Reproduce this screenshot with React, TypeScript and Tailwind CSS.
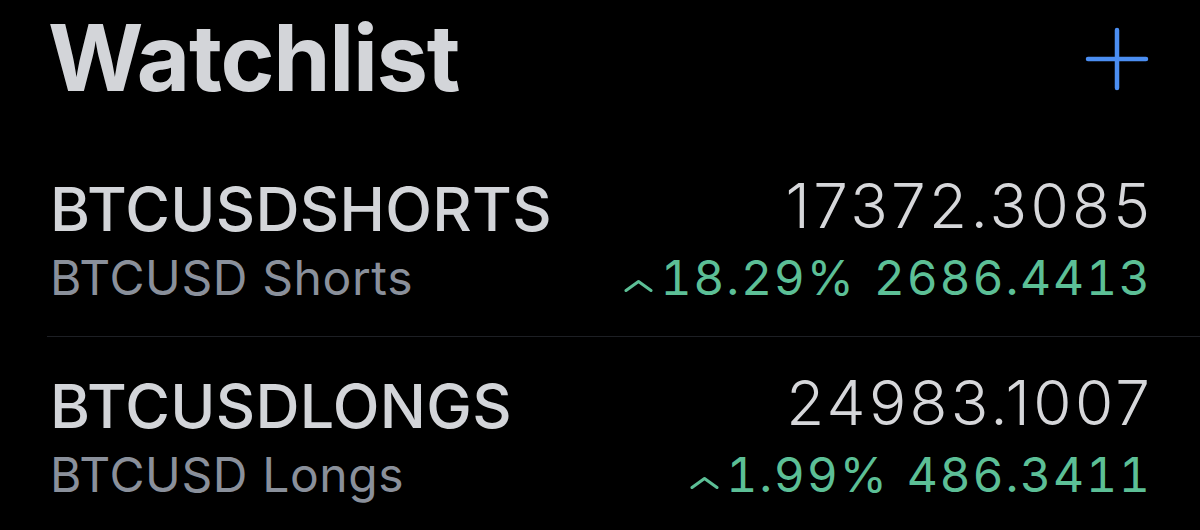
import React from 'react';

type Item = {
  symbol: string;
  name: string;
  price: string;
  pct: string;
  change: string;
};

const items: Item[] = [
  { symbol: 'BTCUSDSHORTS', name: 'BTCUSD Shorts', price: '17372.3085', pct: '18.29%', change: '2686.4413' },
  { symbol: 'BTCUSDLONGS', name: 'BTCUSD Longs', price: '24983.1007', pct: '1.99%', change: '486.3411' },
];

const Caret: React.FC = () => (
  <svg width="30" height="14" viewBox="0 0 30 14" className="mr-[6px] mb-[21px] shrink-0">
    <path d="M2 11.5 L14.5 2.5 L27 11.5" fill="none" stroke="#5cbf96" strokeWidth="3" strokeLinecap="round" strokeLinejoin="round" />
  </svg>
);

const Row: React.FC<{ item: Item; last?: boolean }> = ({ item, last }) => (
  <div className={`flex justify-between ml-[47px] pl-[3px] pr-[50px] pt-[36px] pb-[22px] ${last ? '' : 'border-b border-[#1d1f24]'}`}>
    <div className="flex flex-col">
      <div className="text-[61px] leading-[66px] font-medium tracking-[0.3px] text-[#d3d5d9]">{item.symbol}</div>
      <div className="text-[48px] leading-[72px] tracking-[0.6px] text-[#8a909b]">{item.name}</div>
    </div>
    <div className="flex flex-col items-end">
      <div className="text-[62px] leading-[60px] font-light tracking-[3.3px] -mr-[3.3px] text-[#d6d7da] mb-[6px]">{item.price}</div>
      <div className="flex items-end text-[48px] leading-[72px] tabular-nums tracking-[1.8px] -mr-[1.8px] text-[#5cbf96]">
        <Caret />
        <span>{item.pct}</span>
        <span className="ml-[18px]">{item.change}</span>
      </div>
    </div>
  </div>
);

export default function App() {
  return (
    <div className="w-[1200px] h-[530px] bg-black overflow-hidden" style={{ fontFamily: 'Inter, "Noto Sans", sans-serif' }}>
      <div className="flex items-center justify-between pl-[48px] pr-[50px] pt-[12px] mb-[36px]">
        <h1 className="text-[92px] leading-[92px] font-bold tracking-[-1.3px] text-[#d3d5d9]">Watchlist</h1>
        <svg width="66" height="66" viewBox="0 0 66 66" className="mt-[2px]">
          <path d="M33 4 V62 M4 33 H62" stroke="#4b8ef2" strokeWidth="4.5" strokeLinecap="round" />
        </svg>
      </div>
      {items.map((it, i) => (
        <Row key={it.symbol} item={it} last={i === items.length - 1} />
      ))}
    </div>
  );
}
